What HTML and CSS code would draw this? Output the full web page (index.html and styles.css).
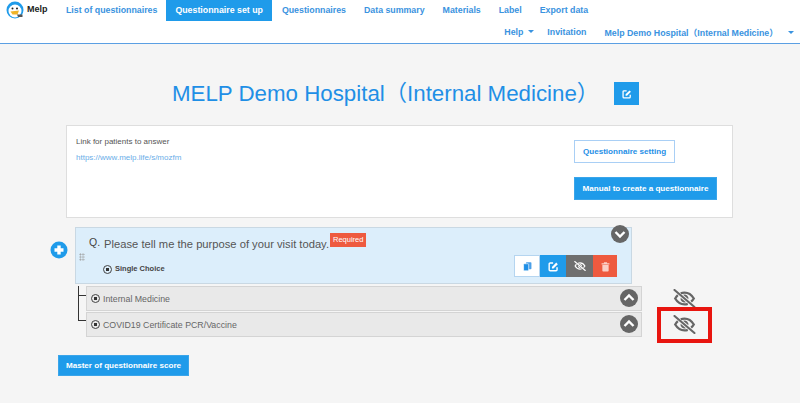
FILE: index.html
```html
<!DOCTYPE html>
<html lang="en">
<head>
<meta charset="utf-8">
<title>Melp</title>
<link rel="stylesheet" href="styles.css">
</head>
<body>
<svg class="defs" width="0" height="0" aria-hidden="true">
  <symbol id="eye-off" viewBox="0 0 24 20">
    <path d="M1.500 1 22.500 19" fill="none" stroke="currentColor" stroke-width="2.200" stroke-linecap="round"/>
    <path d="M8 4.500C9.300 4 10.600 3.800 12 3.800c4 0 7.500 2.400 9.800 6.200-.8 1.300-1.700 2.400-2.800 3.300" fill="none" stroke="currentColor" stroke-width="2.400"/>
    <path d="M5 6.500C3.800 7.500 3 8.700 2.200 10c2.300 3.800 5.800 6.200 9.800 6.200 1.200 0 2.300-.2 3.400-.6" fill="none" stroke="currentColor" stroke-width="2.400"/>
    <path d="M7.900 9.120A4.200 4.200 0 0 0 13.500 13.920z" fill="currentColor"/>
    <path d="M10.500 6.080A4.200 4.200 0 0 1 16.100 10.880z" fill="currentColor"/>
  </symbol>
  <symbol id="edit" viewBox="0 0 14 14">
    <path d="M6.500 2.500H2.800A1.300 1.300 0 0 0 1.500 3.800v7.400a1.300 1.300 0 0 0 1.300 1.300h7.400a1.300 1.300 0 0 0 1.300-1.300V8" fill="none" stroke="currentColor" stroke-width="1.800"/>
    <path d="M5 7.500 10.500 2l2 2L7 9.500H5z" fill="currentColor"/>
  </symbol>
</svg>

<header class="topbar">
  <div class="brand">
    <svg class="logo" viewBox="0 0 18 18" aria-hidden="true">
      <circle cx="9" cy="9" r="8.500" fill="#1f9bea"/>
      <ellipse cx="9" cy="10" rx="6.500" ry="6.500" fill="#fff"/>
      <circle cx="6.500" cy="7.500" r="1" fill="#222"/>
      <circle cx="11" cy="7.500" r="1" fill="#222"/>
      <path d="M4.500 10.500 13 9.500 11.500 13.500H6.500z" fill="#f0b429"/>
      <path d="M11 13.500h5.500v2.500H12z" fill="#555"/>
    </svg>
    <span class="brand-name">Melp</span>
  </div>
  <div class="nav-area">
    <nav class="nav-main">
      <a class="nav-link">List of questionnaires</a>
      <a class="nav-link is-active">Questionnaire set up</a>
      <a class="nav-link">Questionnaires</a>
      <a class="nav-link">Data summary</a>
      <a class="nav-link">Materials</a>
      <a class="nav-link">Label</a>
      <a class="nav-link">Export data</a>
    </nav>
    <nav class="nav-sub">
      <a class="sub-link">Help<i class="caret"></i></a>
      <a class="sub-link">Invitation</a>
      <a class="sub-link">Melp Demo Hospital（Internal Medicine）<i class="caret caret-far"></i></a>
    </nav>
  </div>
</header>

<main class="page">
  <div class="title-row">
    <h1 class="title">MELP Demo Hospital（Internal Medicine）</h1>
    <button class="title-edit" type="button"><svg class="ico-edit"><use href="#edit"/></svg></button>
  </div>

  <section class="link-card">
    <div class="link-info">
      <p class="link-label">Link for patients to answer</p>
      <a class="link-url">https://www.melp.life/s/mozfm</a>
    </div>
    <div class="link-actions">
      <button class="btn btn-outline" type="button">Questionnaire setting</button>
      <button class="btn btn-solid" type="button">Manual to create a questionnaire</button>
    </div>
  </section>

  <section class="question-wrap">
    <button class="add-btn" type="button" aria-label="Add">
      <svg viewBox="0 0 18 18"><circle cx="9" cy="9" r="8.500" fill="#1f9bea"/><path d="M9 4.500v9M4.500 9h9" stroke="#fff" stroke-width="3.400"/></svg>
    </button>
    <div class="question">
      <span class="grip" aria-hidden="true"></span>
      <div class="q-head">
        <span class="q-mark">Q.</span>
        <span class="q-text">Please tell me the purpose of your visit today.</span>
        <span class="required">Required</span>
      </div>
      <div class="q-foot">
        <span class="q-type"><i class="radio"></i>Single Choice</span>
        <div class="tools">
          <button class="tool tool-copy" type="button"><svg viewBox="0 0 14 14"><rect x="5" y="1.500" width="7" height="9" rx="1" fill="#4a9fe8"/><rect x="2" y="3.500" width="6.500" height="9" rx="1" fill="#1f8fe6" stroke="#fff" stroke-width=".8"/></svg></button>
          <button class="tool tool-edit" type="button"><svg class="ico-edit"><use href="#edit"/></svg></button>
          <button class="tool tool-hide" type="button"><svg class="ico-eye-sm"><use href="#eye-off"/></svg></button>
          <button class="tool tool-del" type="button"><svg viewBox="0 0 14 14"><path d="M5 1.500h4V3h3v1.300H2V3h3zM3 5h8v7.500a1 1 0 0 1-1 1H4a1 1 0 0 1-1-1z" fill="#fbcfc6"/></svg></button>
        </div>
      </div>
      <span class="toggle toggle-q"><svg viewBox="0 0 18 18"><path d="M4.500 7 9 11.500 13.500 7" fill="none" stroke="#fff" stroke-width="2.400"/></svg></span>
    </div>

    <div class="options">
      <span class="tree" aria-hidden="true"></span>
      <div class="option-line">
        <div class="option"><i class="radio"></i><span>Internal Medicine</span>
          <span class="toggle"><svg viewBox="0 0 18 18"><path d="M4.500 11 9 6.500 13.500 11" fill="none" stroke="#fff" stroke-width="2.400"/></svg></span>
        </div>
        <span class="eye-cell"><svg class="ico-eye"><use href="#eye-off"/></svg></span>
      </div>
      <div class="option-line">
        <div class="option"><i class="radio"></i><span>COVID19 Certificate PCR/Vaccine</span>
          <span class="toggle"><svg viewBox="0 0 18 18"><path d="M4.500 11 9 6.500 13.500 11" fill="none" stroke="#fff" stroke-width="2.400"/></svg></span>
        </div>
        <span class="eye-cell"><svg class="ico-eye"><use href="#eye-off"/></svg><span class="highlight"></span></span>
      </div>
    </div>
  </section>

  <button class="btn btn-solid btn-score" type="button">Master of questionnaire score</button>
</main>
</body>
</html>
```

FILE: styles.css
```css
* { box-sizing: border-box; }
html, body { margin: 0; height: 403px; overflow: hidden; }
body { background: #f5f5f5; font-family: "Liberation Sans", "Noto Sans CJK JP", Arial, sans-serif; color: #444; }
.defs { position: absolute; }
button { font-family: inherit; cursor: pointer; }

.topbar { display: flex; height: 44px; background: #fff; border-bottom: 1px solid #5b9fe3; }
.brand { width: 57px; flex: none; display: flex; align-items: flex-start; padding: 1px 0 0 6px; gap: 3px; }
.logo { width: 18px; height: 18px; flex: none; }
.brand-name { font-size: 9px; font-weight: bold; color: #222; line-height: 17px; }
.nav-area { flex: 1; display: flex; flex-direction: column; }
.nav-main { display: flex; height: 21px; }
.nav-link { font-size: 8.800px; font-weight: bold; color: #3a93e0; line-height: 21px; padding: 0 9px; }
.nav-link.is-active { background: #1f9bea; color: #fff; margin-right: 1px; }
.nav-sub { display: flex; justify-content: flex-end; height: 22px; align-items: center; padding-right: 6px; }
.sub-link { font-size: 8.800px; font-weight: bold; color: #3a93e0; margin-left: 13px; }
.sub-link:last-child { margin-left: 18px; }
.caret { display: inline-block; margin-left: 5px; vertical-align: 2px; border: 3px solid transparent; border-top-color: #3a93e0; border-bottom-width: 0; }
.caret-far { margin-left: 10px; }

.page { display: flex; flex-direction: column; align-items: flex-start; }
.title-row { display: flex; align-items: flex-start; margin: 36px 0 0 172px; height: 26px; }
.title { margin: 1px 0 0; font-size: 22.300px; line-height: 26px; font-weight: normal; color: #1f8fe6; white-space: nowrap; }
.title-edit { width: 25px; height: 23px; margin: 2px 0 0 15px; padding: 0; border: 0; background: #1f9bea; color: #fff; display: flex; align-items: center; justify-content: center; }
.ico-edit { width: 10px; height: 10px; }

.link-card { width: 667px; height: 93px; margin: 19px 0 0 66px; padding: 11px 15px 0 9px; background: #fff; border: 1px solid #dedede; display: flex; justify-content: space-between; }
.link-label { margin: 0 0 6px; font-size: 8px; color: #555; line-height: 10px; }
.link-url { font-size: 8px; color: #6aaee8; line-height: 10px; display: block; }
.link-actions { display: flex; flex-direction: column; align-items: flex-start; gap: 14px; padding-top: 3px; }
.btn { font-size: 8.100px; font-weight: bold; padding: 0; }
.btn-outline { width: 101px; height: 23px; background: #fff; border: 1px solid #a9cff5; color: #1f8fe6; }
.btn-solid { width: 143px; height: 23px; background: #1f9bea; border: 1px solid #3aa5ea; color: #fff; }

.question-wrap { margin: 9px 0 0 50px; display: flex; flex-direction: column; position: relative; }
.add-btn { position: absolute; left: 0; top: 14px; width: 18px; height: 18px; padding: 0; border: 0; background: none; }
.add-btn svg { display: block; }
.question { position: relative; width: 557px; height: 57px; margin-left: 25px; padding: 5px 14px 0 13px; background: #dceefb; border: 1px solid #c9d8e3; }
.grip { position: absolute; left: 3px; top: 25px; width: 6px; height: 8px; background-image: radial-gradient(#9a9a9a 0.8px, transparent 1px); background-size: 2.700px 2.700px; }
.q-head { display: flex; align-items: flex-start; height: 22px; }
.q-mark { font-size: 10.500px; color: #444; margin-top: 3px; line-height: 12px; }
.q-text { font-size: 11.200px; color: #555; line-height: 14px; margin: 4px 0 0 4px; white-space: nowrap; }
.required { background: #ee5a3f; color: #fff; font-size: 7.500px; line-height: 13px; padding: 0 3px; height: 14px; margin: 0 0 0 1px; }
.q-foot { display: flex; justify-content: space-between; align-items: flex-start; margin-top: 0; }
.q-type { font-size: 7.500px; font-weight: bold; color: #444; display: flex; align-items: center; margin: 9px 0 0 14px; line-height: 10px; }
.radio { width: 9px; height: 9px; border: 1px solid #444; border-radius: 50%; margin-right: 3px; flex: none; display: flex; background: radial-gradient(circle, #333 1.500px, transparent 1.800px); }
.tools { display: flex; }
.tool { width: 26px; height: 22px; padding: 0; border: 0; display: flex; align-items: center; justify-content: center; }
.tool svg { width: 11px; height: 11px; }
.tool-copy { background: #fff; border: 1px solid #b5d5f0; }
.tool-edit { background: #1f9bea; color: #fff; }
.tool-hide { background: #6f6f6f; color: #fff; width: 27px; }
.tool-del { background: #ee5a3f; width: 24px; }
.tool .ico-eye-sm { width: 12px; height: 10px; }
.toggle { position: absolute; right: 3px; top: 3px; width: 18px; height: 18px; border-radius: 50%; background: #666; display: block; }
.toggle svg { display: block; width: 18px; height: 18px; }
.toggle-q { top: -3px; right: 2px; }

.options { position: relative; margin: 2px 0 0 36px; display: flex; flex-direction: column; gap: 1px; }
.tree { position: absolute; left: -8px; top: 0; width: 8px; height: 35px; border-left: 1px solid #333; border-bottom: 1px solid #333; }
.tree::before { content: ""; position: absolute; left: 0; top: 9px; width: 7px; border-top: 1px solid #333; }
.option-line { display: flex; align-items: center; }
.option { position: relative; width: 556px; height: 25px; display: flex; align-items: center; padding-left: 4px; background: #e9e9e9; border: 1px solid #d4d4d4; font-size: 8.800px; color: #666; }
.option .toggle { top: 2px; right: 3px; }
.eye-cell { position: relative; width: 24px; height: 20px; margin-left: 31px; color: #666; }
.ico-eye { width: 23px; height: 19px; display: block; }
.highlight { position: absolute; left: -16px; top: -8px; width: 55px; height: 36px; border: 4px solid #e8150f; }

.btn-score { width: 131px; height: 21px; margin: 18px 0 0 58px; }
```
